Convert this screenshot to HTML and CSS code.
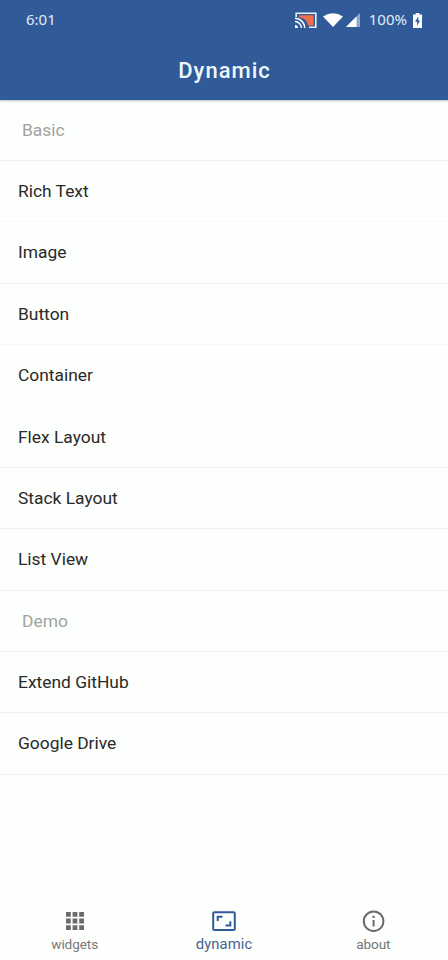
FILE: index.html
```html
<!DOCTYPE html>
<html lang="en">
<head>
<meta charset="utf-8">
<title>Dynamic</title>
<link rel="stylesheet" href="styles.css">
</head>
<body>
<div class="app">
  <header class="header">
    <div class="status">
      <span class="time">6:01</span>
      <svg class="cast" width="22" height="17" viewBox="0 0 22 17">
        <path d="M4 3.2H18.6V13.5H13C12.5 9 9.5 6 4 5.2Z" fill="#f26d4b"/>
        <path d="M1.2 5V1.2H20.8V15.3H14" fill="none" stroke="#e9f3fb" stroke-width="1.6"/>
        <path d="M0 6.3A9.7 9.7 0 0 1 9.7 16M0 9.6A6.4 6.4 0 0 1 6.4 16" fill="none" stroke="#fff" stroke-width="1.5"/>
        <path d="M0 13A3 3 0 0 1 3 16H0Z" fill="#fff"/>
      </svg>
      <svg class="wifi" width="20" height="14" viewBox="0 0 20 14"><path d="M0 3.5Q10-3 20 3.5L10 14Z" fill="#fff"/></svg>
      <svg class="signal" width="14" height="14" viewBox="0 0 14 14"><path d="M14 0V14H0Z" fill="#8fa9ce"/><path d="M10.5 3.5V14H0Z" fill="#fff"/></svg>
      <span class="percent">100%</span>
      <svg class="battery" width="9" height="15" viewBox="0 0 9 15"><path d="M2.7 0H6.3V1.5H9V15H0V1.5H2.7Z" fill="#fff"/><path d="M5.3 3.5L2 8.8H4.1V12.8L7 7.5H5.3Z" fill="#315a98"/></svg>
    </div>
    <h1 class="title">Dynamic</h1>
  </header>
  <main class="list">
    <div class="row section">Basic</div>
    <div class="row faint">Rich Text</div>
    <div class="row">Image</div>
    <div class="row faint">Button</div>
    <div class="row plain">Container</div>
    <div class="row">Flex Layout</div>
    <div class="row">Stack Layout</div>
    <div class="row">List View</div>
    <div class="row section">Demo</div>
    <div class="row">Extend GitHub</div>
    <div class="row">Google Drive</div>
  </main>
  <nav class="tabs">
    <a class="tab">
      <svg width="26" height="26" viewBox="0 0 26 26" fill="#6b6b6b"><path d="M4 4h4.8v4.8H4zM10.6 4h4.8v4.8h-4.8zM17.2 4h4.8v4.8h-4.8zM4 10.6h4.8v4.8H4zM10.6 10.6h4.8v4.8h-4.8zM17.2 10.6h4.8v4.8h-4.8zM4 17.2h4.8v4.8H4zM10.6 17.2h4.8v4.8h-4.8zM17.2 17.2h4.8v4.8h-4.8z"/></svg>
      <span>widgets</span>
    </a>
    <a class="tab active">
      <svg width="26" height="26" viewBox="0 0 26 26" fill="none" stroke="#315a98" stroke-width="2"><rect x="2.2" y="4.2" width="21.6" height="17.8" rx="1.2"/><path d="M6.7 13V8.8H11.5M19.3 13.2V17.4H14.5"/></svg>
      <span>dynamic</span>
    </a>
    <a class="tab">
      <svg width="26" height="26" viewBox="0 0 26 26" fill="none" stroke="#6b6b6b" stroke-width="2"><circle cx="13.6" cy="13.2" r="9.8"/><path d="M13.6 12V18.6M13.6 7.8V10"/></svg>
      <span>about</span>
    </a>
  </nav>
</div>
</body>
</html>
```

FILE: styles.css
```css
* { box-sizing: border-box; }
body { margin: 0; background: #fdfffd; font-family: Roboto, "Liberation Sans", sans-serif; }
.app { display: flex; flex-direction: column; height: 960px; }
.header { height: 99.5px; background: #315a98; color: #ecf7fb; box-shadow: 0 1px 2px rgba(40, 80, 70, .35); }
.status { display: flex; align-items: center; height: 40px; padding: 0 26px; font-family: "Noto Sans", sans-serif; font-size: 15px; color: #e0edf8; }
.time { margin-right: auto; padding-bottom: 2px; }
.cast { margin-right: 6px; }
.wifi { margin-right: 3px; }
.signal { margin-right: 9px; }
.percent { margin-right: 6px; padding-bottom: 2px; }
.title { margin: 0; height: 62px; line-height: 62px; text-align: center; text-indent: 1px; font-size: 22px; font-weight: 500; letter-spacing: 1px; }
.list { flex: 1; }
.row { display: flex; align-items: center; height: 61.38px; padding: 0 18px; border-bottom: 1px solid #f0f2f1; font-size: 17.4px; color: #292929; }
.section { padding-left: 22px; color: #a0a2a1; }
.faint { border-bottom-color: #f7f8f7; }
.plain { border-bottom-color: transparent; }
.tabs { display: flex; height: 61px; box-shadow: 0 -1px 2px rgba(0, 0, 0, .025); }
.tab { flex: 1; display: flex; flex-direction: column; align-items: center; padding-top: 9px; font-size: 13.6px; line-height: 18px; letter-spacing: -.1px; color: #777; }
.tab svg { flex: none; }
.tab span { margin-top: 1px; }
.active { color: #46648f; font-size: 14.8px; letter-spacing: .1px; }
```
